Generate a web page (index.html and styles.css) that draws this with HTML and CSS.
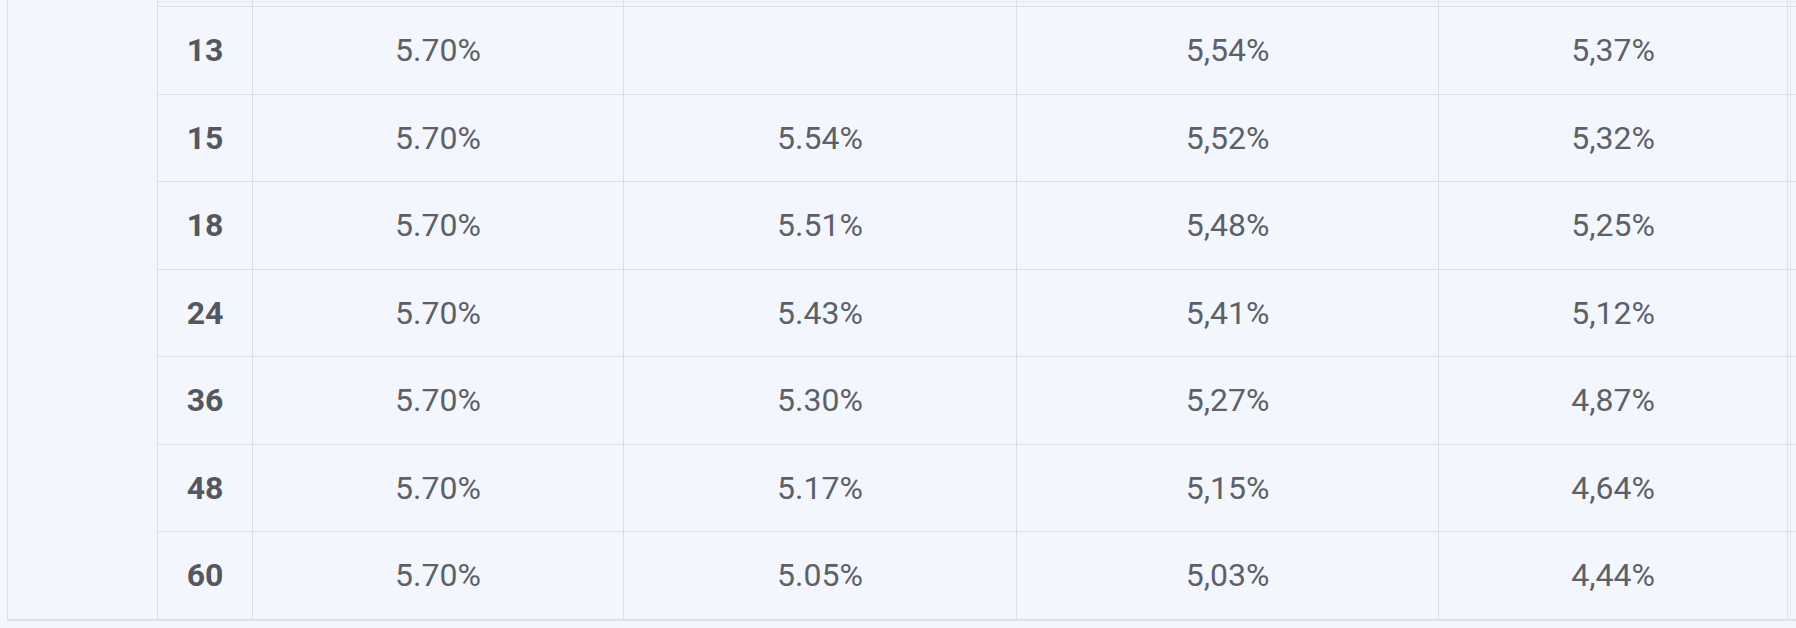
FILE: index.html
```html
<!DOCTYPE html>
<html lang="en">
<head>
<meta charset="utf-8">
<title>Rates</title>
<link rel="stylesheet" href="styles.css">
</head>
<body>
<div class="card">
  <div class="rates">
    <div class="cell blank"></div>
    <div class="cell stub"></div><div class="cell stub"></div><div class="cell stub"></div><div class="cell stub"></div><div class="cell stub"></div><div class="cell stub gutter"></div><div class="cell stub rest"></div>

    <div class="cell term">13</div><div class="cell">5.70%</div><div class="cell"></div><div class="cell">5,54%</div><div class="cell">5,37%</div><div class="cell gutter"></div><div class="cell rest"></div>
    <div class="cell term">15</div><div class="cell">5.70%</div><div class="cell">5.54%</div><div class="cell">5,52%</div><div class="cell">5,32%</div><div class="cell gutter"></div><div class="cell rest"></div>
    <div class="cell term">18</div><div class="cell">5.70%</div><div class="cell">5.51%</div><div class="cell">5,48%</div><div class="cell">5,25%</div><div class="cell gutter"></div><div class="cell rest"></div>
    <div class="cell term">24</div><div class="cell">5.70%</div><div class="cell">5.43%</div><div class="cell">5,41%</div><div class="cell">5,12%</div><div class="cell gutter"></div><div class="cell rest"></div>
    <div class="cell term">36</div><div class="cell">5.70%</div><div class="cell">5.30%</div><div class="cell">5,27%</div><div class="cell">4,87%</div><div class="cell gutter"></div><div class="cell rest"></div>
    <div class="cell term">48</div><div class="cell">5.70%</div><div class="cell">5.17%</div><div class="cell">5,15%</div><div class="cell">4,64%</div><div class="cell gutter"></div><div class="cell rest"></div>
    <div class="cell term">60</div><div class="cell">5.70%</div><div class="cell">5.05%</div><div class="cell">5,03%</div><div class="cell">4,44%</div><div class="cell gutter"></div><div class="cell rest"></div>
  </div>
</div>
</body>
</html>
```
FILE: styles.css
```css
html, body {
  margin: 0;
  padding: 0;
  background: #f3f7fd;
  overflow: hidden;
}

body {
  font-family: Roboto, "Liberation Sans", sans-serif;
  color: #5d6167;
}

.card {
  width: 1804px;
  box-sizing: border-box;
  margin: -20px 0 0 7px;
  border-left: 1px solid #d9dfe9;
  border-bottom: 1px solid #e1e6ee;
}

.rates {
  display: grid;
  grid-template-columns: 150px 95px 371px 393px 422px 349px 3px 20px;
  grid-template-rows: 27px repeat(7, 87.5px);
}

.cell {
  box-sizing: border-box;
  display: flex;
  align-items: center;
  justify-content: center;
  border-right: 1px solid #d9dfe9;
  border-bottom: 1px solid #d9dfe9;
  font-size: 32px;
  font-weight: 400;
}

.cell.gutter {
  border-right: 1px solid #e4e9f0;
}

.cell.rest {
  border-right: none;
}

.cell.blank {
  grid-row: 1 / -1;
  grid-column: 1;
}

.cell.stub {
  background: linear-gradient(to bottom, transparent 21px, #e5eaf1 21px, #e5eaf1 22px, transparent 22px);
}

.cell.term {
  font-weight: 700;
  color: #54585e;
}
```
